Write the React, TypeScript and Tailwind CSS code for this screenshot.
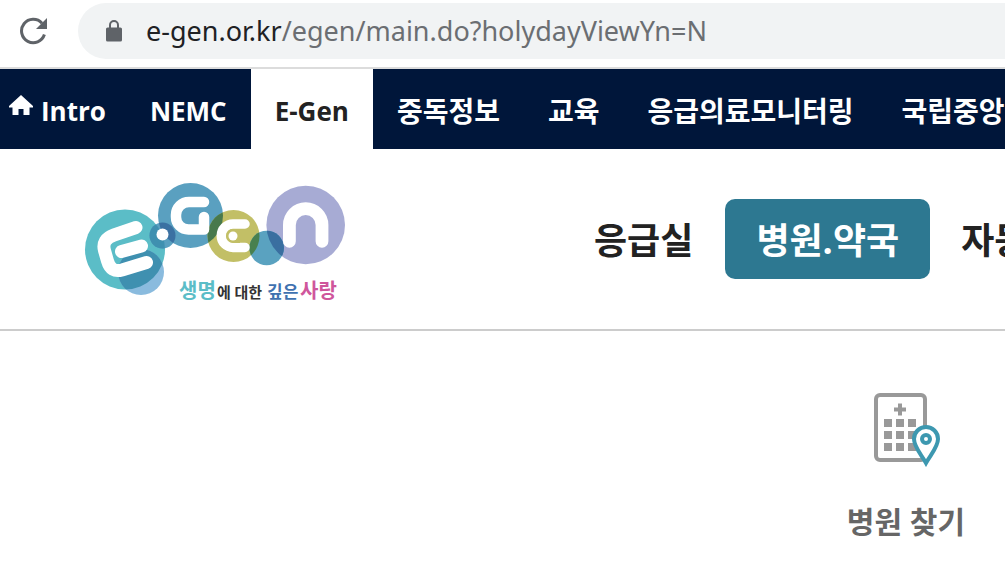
const uiFont = "font-['Open_Sans','Noto_Sans_CJK_KR',sans-serif]";

function ReloadIcon() {
  return (
    <svg viewBox="0 0 28 28" className="h-7 w-7" aria-hidden="true">
      <path d="M24.4 17.5A11.700 11.700 0 1 1 22 6.200" fill="none" stroke="#5f6368" strokeWidth="3" />
      <path d="M27 1v11H16z" fill="#5f6368" />
    </svg>
  );
}

function LockIcon() {
  return (
    <svg viewBox="0 0 16 22" className="h-[22px] w-4" aria-hidden="true">
      <rect x="0" y="7.5" width="16" height="14" rx="1.6" fill="#5f6368" />
      <path d="M4 9V5a4 4 0 0 1 8 0v4" fill="none" stroke="#5f6368" strokeWidth="2" />
    </svg>
  );
}

function HomeIcon() {
  return (
    <svg viewBox="0 0 24 21" className="h-[21px] w-6" aria-hidden="true">
      <path d="M12 0 24 11v1.500h-3.500V20h-6v-6h-5v6h-6v-7.500H0V11z" fill="#fff" />
    </svg>
  );
}

function Logo() {
  return (
    <svg viewBox="85 182 260 120" className="h-[120px] w-[260px] overflow-visible" role="img" aria-label="E-Gen">
      <defs>
        <clipPath id="teal"><circle cx="125" cy="249.500" r="40" /></clipPath>
        <clipPath id="blue"><circle cx="190.500" cy="215.500" r="32.500" /></clipPath>
        <clipPath id="olive"><circle cx="233.500" cy="236" r="26" /></clipPath>
        <clipPath id="violet"><circle cx="305.700" cy="225" r="39.300" /></clipPath>
      </defs>
      <circle cx="125" cy="249.500" r="40" fill="#5bbdc7" />
      <circle cx="141" cy="272" r="23" fill="#8abbde" />
      <circle cx="141" cy="272" r="23" fill="#3f90b0" clipPath="url(#teal)" />
      <circle cx="190.500" cy="215.500" r="32.500" fill="#5aa0c0" />
      <circle cx="162.500" cy="235.500" r="13" fill="#5aa0c0" />
      <circle cx="162.500" cy="235.500" r="13" fill="#3f90b0" clipPath="url(#teal)" />
      <circle cx="162.500" cy="235.500" r="13" fill="#3b71a2" clipPath="url(#blue)" />
      <circle cx="162.500" cy="234.500" r="6" fill="#fff" />
      <circle cx="233.500" cy="236" r="26" fill="#c2bf66" />
      <circle cx="233.500" cy="236" r="26" fill="#48794c" clipPath="url(#blue)" />
      <circle cx="305.700" cy="225" r="39.300" fill="#a7abd4" />
      <circle cx="266.700" cy="248" r="17.300" fill="#5aa2c0" />
      <circle cx="266.700" cy="248" r="17.300" fill="#48804f" clipPath="url(#olive)" />
      <circle cx="266.700" cy="248" r="17.300" fill="#3a6fa0" clipPath="url(#violet)" />
      <g fill="none" stroke="#fff" strokeLinecap="round" strokeLinejoin="round">
        <path strokeWidth="13" d="M136 227.500 114 235Q101.500 239.500 104.500 250.500L107.500 261Q111 273 122 270L146.500 262.500" />
        <path strokeWidth="13" d="M121.500 251.500 141.500 246" />
        <path strokeWidth="10.500" d="M204 202H189A13 13 0 0 0 176 215V217A12.500 12.500 0 0 0 188.500 229.500H204V217" />
        <path strokeWidth="9.500" d="M245 224H233A11.700 11.700 0 0 0 233 247.400H245" />
        <path strokeWidth="12.800" d="M289.400 241.300V225A16.300 16.300 0 0 1 322 225V241.300" />
      </g>
      <path d="M240 229H233a7 7 0 0 0 0 14h7z" fill="#c2bf66" />
      <circle cx="233" cy="236" r="4.500" fill="#fff" />
      <g className="font-['Liberation_Serif','Noto_Sans_CJK_KR',serif] font-bold">
        <text x="179" y="298" fontSize="20" fill="#5bbdc7">생명</text>
        <text x="217" y="298" fontSize="15" fill="#333">에 대한</text>
        <text x="267" y="298" fontSize="17" fill="#3f72b0">깊은</text>
        <text x="300" y="298" fontSize="20" fill="#cf569c">사랑</text>
      </g>
    </svg>
  );
}

function HospitalIcon() {
  const cells = [0, 12, 24];
  return (
    <svg viewBox="0 0 68 74" className="h-[74px] w-[68px]" aria-hidden="true">
      <rect x="2" y="2" width="49" height="65" rx="4" fill="none" stroke="#999" strokeWidth="4" />
      <path d="M26 10.500v12M20 16.500h12" stroke="#999" strokeWidth="4" />
      {cells.map((y) => cells.map((x) => (
        <rect key={`${x}-${y}`} x={10 + x} y={26 + y} width="8" height="8" fill="#999" />
      )))}
      <path d="M52 70C47 61 40 54 40 46a12 12 0 0 1 24 0c0 8-7 15-12 24z" fill="#fff" stroke="#3d98b0" strokeWidth="4" />
      <circle cx="52" cy="46" r="4" fill="#fff" stroke="#3d98b0" strokeWidth="4" />
    </svg>
  );
}

const siteLinks = ["중독정보", "교육", "응급의료모니터링", "국립중앙"];

export default function App() {
  return (
    <div className={`min-h-screen overflow-hidden bg-white text-[#222] ${uiFont}`}>
      <div className="flex h-[69px] items-start border-b-2 border-[#dcdcdc] pt-[3px]">
        <button type="button" aria-label="Reload" className="ml-5 mt-[14px]">
          <ReloadIcon />
        </button>
        <div className="ml-[30px] flex h-14 flex-1 items-center gap-6 rounded-l-full bg-[#f1f3f4] pl-7 font-['Noto_Sans',sans-serif] text-[27px] whitespace-nowrap">
          <LockIcon />
          <span className="text-[#6b6e72]"><span className="text-[#202124]">e-gen.or.kr</span>/egen/main.do?holydayViewYn=N</span>
        </div>
      </div>
      <nav className="flex h-20 bg-[#00163a] text-[26px] font-bold whitespace-nowrap text-white">
        <a href="#intro" className="flex shrink-0 items-center gap-2 pt-1 pr-5 pl-[9px]">
          <span className="pb-3"><HomeIcon /></span>
          Intro
        </a>
        <a href="#nemc" className="flex shrink-0 items-center px-6 pt-1">NEMC</a>
        <a href="#egen" className="flex shrink-0 items-center bg-white px-6 pt-1 text-[#222]">E-Gen</a>
        {siteLinks.map((label) => (
          <a key={label} href="#site" className="flex shrink-0 items-center px-6 pt-1 text-[28px]">{label}</a>
        ))}
      </nav>
      <header className="flex h-[182px] items-start border-b-2 border-[#ccc] pl-[85px]">
        <a href="#home" className="mt-[33px] shrink-0"><Logo /></a>
        <nav className="mt-[50px] ml-[217px] flex h-20 shrink-0 text-[36px] font-bold whitespace-nowrap">
          <a href="#er" className="flex items-center px-8 pt-1">응급실</a>
          <a href="#hospital" className="flex items-center rounded-[10px] bg-[#2d7891] px-[31px] pt-1 text-white">병원.약국</a>
          <a href="#aed" className="flex items-center px-[31px] pt-1">자동</a>
        </nav>
      </header>
      <main className="flex justify-end pt-[62px] pr-10">
        <a href="#find" className="flex flex-col items-center gap-8 text-[30px] leading-[46px] font-bold text-[#666]">
          <span className="pl-1"><HospitalIcon /></span>
          병원 찾기
        </a>
      </main>
    </div>
  );
}
